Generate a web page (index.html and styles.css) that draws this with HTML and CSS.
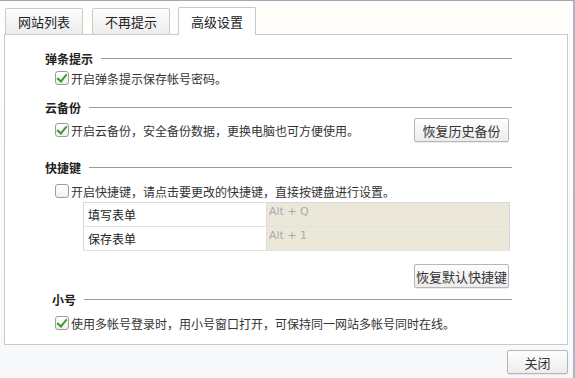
FILE: index.html
```
<!DOCTYPE html>
<html lang="zh-CN">
<head>
	<meta charset="UTF-8">
	<title>高级设置</title>
	<link rel="stylesheet" href="styles.css">
</head>
<body>
	<div class="dialog">
		<div class="tabs">
			<a href="#" class="tab">网站列表</a>
			<a href="#" class="tab">不再提示</a>
			<a href="#" class="tab tab-active">高级设置</a>
		</div>
		<div class="panel">
			<!-- 弹条提示 -->
			<div class="group g1">
				<div class="group-title">弹条提示</div>
				<label class="row"><span class="check checked"></span>开启弹条提示保存帐号密码。</label>
			</div>
			<!-- 云备份 -->
			<div class="group g2">
				<div class="group-title">云备份</div>
				<div class="row row-btn">
					<label class="row"><span class="check checked"></span>开启云备份，安全备份数据，更换电脑也可方便使用。</label>
					<a href="#" class="btn">恢复历史备份</a>
				</div>
			</div>
			<!-- 快捷键 -->
			<div class="group g3">
				<div class="group-title">快捷键</div>
				<label class="row"><span class="check"></span>开启快捷键，请点击要更改的快捷键，直接按键盘进行设置。</label>
				<table class="keys">
					<tr><td class="k-name">填写表单</td><td class="k-val">Alt + Q</td></tr>
					<tr><td class="k-name">保存表单</td><td class="k-val">Alt + 1</td></tr>
				</table>
				<div class="btn-line"><a href="#" class="btn">恢复默认快捷键</a></div>
			</div>
			<!-- 小号 -->
			<div class="group g4">
				<div class="group-title">小号</div>
				<label class="row"><span class="check checked"></span>使用多帐号登录时，用小号窗口打开，可保持同一网站多帐号同时在线。</label>
			</div>
		</div>
		<div class="footer">
			<a href="#" class="btn btn-close">关闭</a>
		</div>
	</div>
</body>
</html>
```
FILE: styles.css
```
* {
	padding: 0;
	margin: 0;
	box-sizing: border-box;
}
html, body {
	width: 575px;
	height: 378px;
	overflow: hidden;
}
body {
	font-family: "Noto Sans CJK SC", "Liberation Sans", sans-serif;
	font-size: 12px;
	color: #333;
	background: #f8f9fb;
}
a {
	text-decoration: none;
	color: #333;
}
.dialog {
	width: 575px;
	height: 378px;
	border-top: 1px solid #9aacbb;
	border-right: 2px solid #a9b7c3;
	background: linear-gradient(#fffefb, #f7f8fa);
}
.tabs {
	display: flex;
	align-items: flex-end;
	height: 33px;
	padding-left: 5px;
	position: relative;
	z-index: 1;
}
.tab {
	width: 78px;
	height: 26px;
	margin-right: 9px;
	border: 1px solid #c9c9c9;
	border-bottom: none;
	border-radius: 2px 2px 0 0;
	background: linear-gradient(#fdfdfd, #ececec);
	display: flex;
	align-items: center;
	justify-content: center;
	color: #222;
	font-size: 13px;
}
.tab-active {
	height: 28px;
	margin-bottom: -1px;
	background: #fff;
	margin-left: -1px;
}
.panel {
	width: 564px;
	height: 311px;
	margin-left: 4px;
	border: 1px solid #cacaca;
	background: #fff;
	padding: 14px 0 0 40px;
}
.group {
	width: 467px;
}
.group-title {
	display: flex;
	align-items: center;
	height: 18px;
	font-weight: bold;
	color: #222;
}
.group-title::after {
	content: "";
	flex: 1;
	height: 1px;
	background: #9a9a9a;
	margin-left: 8px;
}
.row {
	display: flex;
	align-items: center;
	height: 18px;
	margin-left: 5px;
}
.g1 .row {
	margin-top: 2px;
}
.g2 {
	margin-top: 11px;
}
.row-btn {
	height: 24px;
	margin-left: 0;
	margin-top: 2px;
	justify-content: space-between;
	padding-right: 3px;
}
.g3 {
	margin-top: 16px;
}
.g3 .row {
	margin-top: 6px;
}
.g4 {
	margin-top: 2px;
}
.g4 .group-title {
	padding-left: 7px;
}
.g4 .row {
	margin-top: 6px;
}
.check {
	width: 14px;
	height: 14px;
	margin: 0 2px 0 5px;
	border: 1px solid #9c9c9c;
	border-radius: 3px;
	background: linear-gradient(#fff, #f0f0f0);
	position: relative;
	flex: none;
}
.check.checked::after {
	content: "";
	position: absolute;
	left: 3px;
	top: 0px;
	width: 4px;
	height: 8px;
	border-right: 2px solid #3d9a2e;
	border-bottom: 2px solid #3d9a2e;
	transform: rotate(40deg);
}
.btn {
	display: flex;
	align-items: center;
	justify-content: center;
	width: 95px;
	height: 24px;
	border: 1px solid #b6b6b6;
	border-radius: 2px;
	background: linear-gradient(#fefefe, #ececec);
	font-size: 13px;
	color: #333;
	box-shadow: 0 1px 1px rgba(0,0,0,0.08);
}
.keys {
	width: 427px;
	margin: 2px 0 0 38px;
	border-collapse: collapse;
	border: 1px solid #d8d8d8;
}
.keys td {
	height: 24px;
	border-bottom: 1px solid #e2e2e2;
}
.k-name {
	width: 183px;
	padding-left: 4px;
	border-right: 1px solid #dcdcdc;
	color: #222;
}
.k-val {
	background: #ebe8d9;
	color: #aaa;
	padding-left: 2px;
	font-size: 11px;
	font-family: "DejaVu Sans", sans-serif;
	vertical-align: top;
	padding-top: 2px;
}
.btn-line {
	display: flex;
	justify-content: flex-end;
	margin-top: 13px;
	padding-right: 3px;
}
.footer {
	display: flex;
	justify-content: flex-end;
	padding: 5px 5px 0 0;
}
.btn-close {
	width: 61px;
}
```
